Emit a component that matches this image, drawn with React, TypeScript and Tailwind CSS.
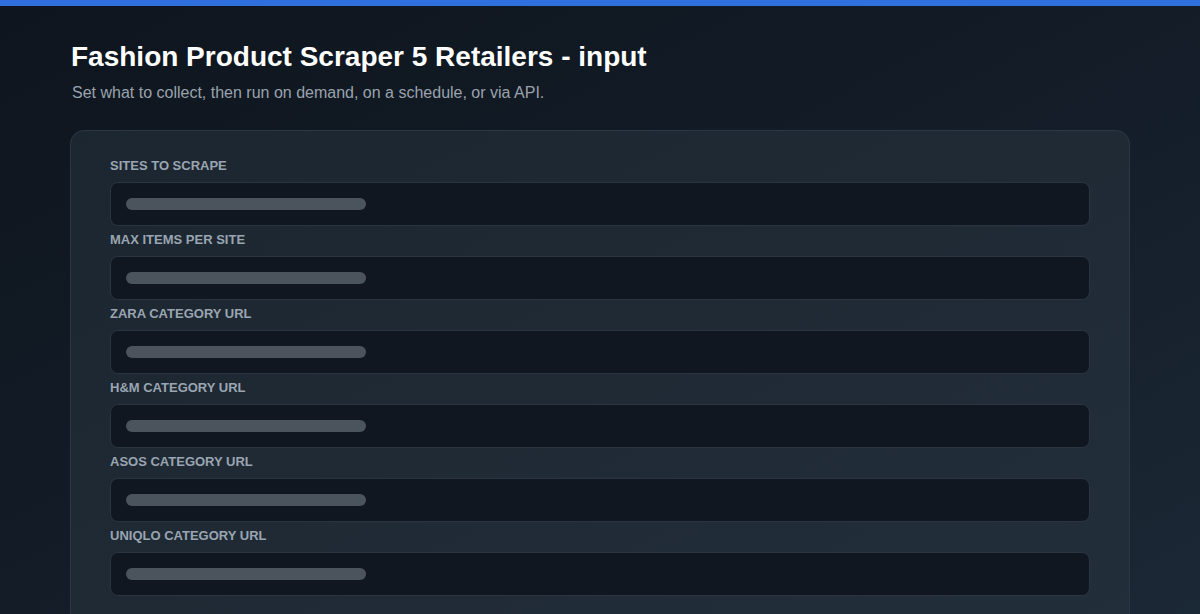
import React from 'react'

const fields = [
  'Sites to scrape',
  'Max items per site',
  'Zara category URL',
  'H&M category URL',
  'ASOS category URL',
  'Uniqlo category URL',
]

function Field({ label }: { label: string }) {
  return (
    <div>
      <div className="h-4 leading-4 mb-[8px] text-[13px] font-bold uppercase text-[#9aa5b1]">
        {label}
      </div>
      <div className="h-[44px] rounded-[8px] border border-[#2a3541] bg-[#101720] flex items-center pl-[15px]">
        <div className="h-3 w-[240px] rounded-full bg-[#4b535c]" />
      </div>
    </div>
  )
}

export default function App() {
  return (
    <div
      className="h-[614px] overflow-hidden bg-gradient-to-br from-[#0e151e] via-[#131c27] to-[#1b2835] text-white"
      style={{ fontFamily: '"Liberation Sans", Arial, sans-serif' }}
    >
      <div className="h-[6px] bg-[#2f6fde]" />
      <div className="px-[70px] pt-[35px]">
        <h1 className="text-[28px] leading-[32px] font-bold text-white pl-px">
          Fashion Product Scraper 5 Retailers - input
        </h1>
        <p className="mt-[10px] text-[16px] leading-[20px] text-[#9aa3ad] pl-[2px]">
          Set what to collect, then run on demand, on a schedule, or via API.
        </p>
        <div className="mt-[27px] rounded-[14px] border border-[#2b3844] bg-gradient-to-br from-[#1c2630] to-[#222e3a] px-[39px] pt-[27px] pb-10 flex flex-col gap-[6px]">
          {fields.map((f) => (
            <Field key={f} label={f} />
          ))}
        </div>
      </div>
    </div>
  )
}
